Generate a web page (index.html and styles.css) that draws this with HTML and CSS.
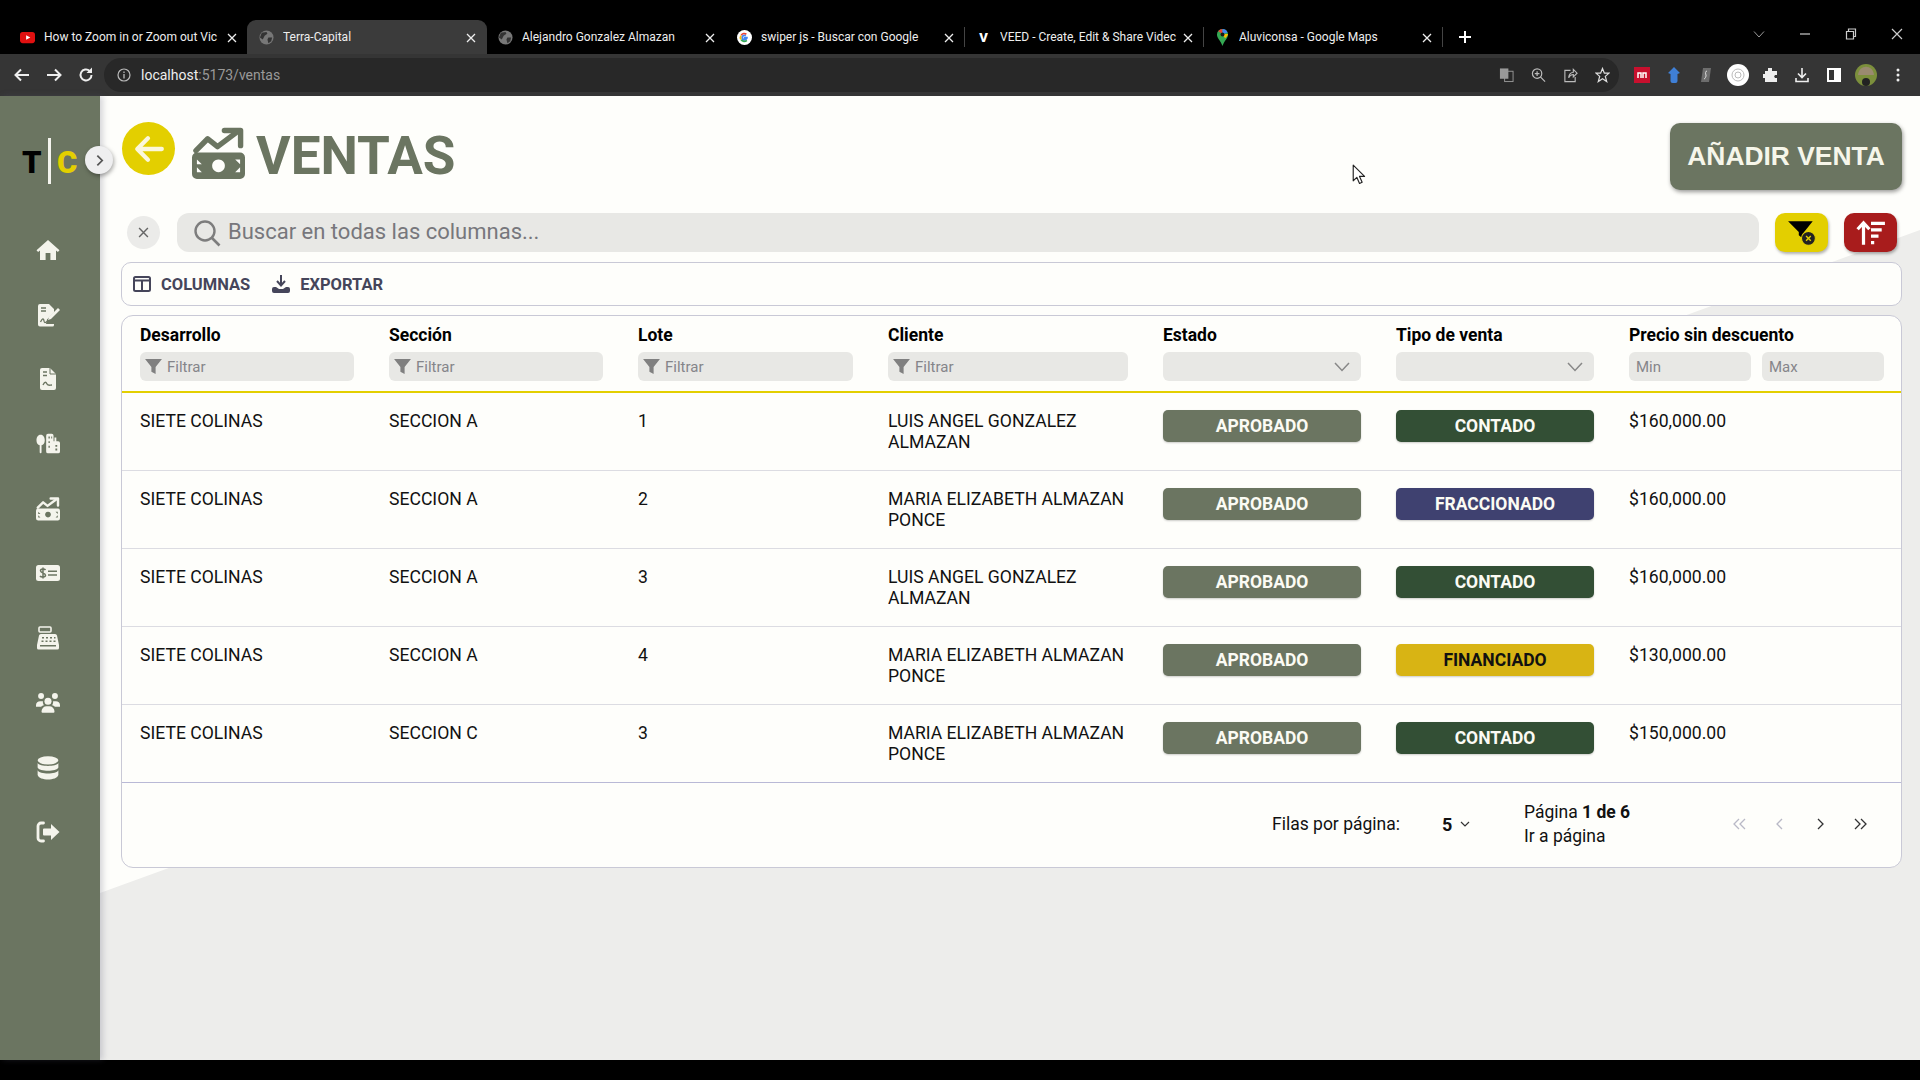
FILE: index.html
```html
<!DOCTYPE html>
<html lang="es">
<head>
  <meta charset="UTF-8" />
  <title>Terra-Capital</title>
  <link rel="stylesheet" href="styles.css">
</head>
<body>
  <svg class="sprites" xmlns="http://www.w3.org/2000/svg">
    <symbol id="i-sales" viewBox="0 0 54 54">
      <path d="M4 24 L16 12 L26 20 L46 5" fill="none" stroke="currentColor" stroke-width="5.5" stroke-linecap="round" stroke-linejoin="round"/>
      <path d="M33 3.500 H49.500 V19" fill="none" stroke="currentColor" stroke-width="5.500" stroke-linecap="round" stroke-linejoin="round"/>
      <path fill-rule="evenodd" fill="currentColor" d="M5 26 H49 a5 5 0 0 1 5 5 V48 a5 5 0 0 1 -5 5 H5 a5 5 0 0 1 -5 -5 V31 a5 5 0 0 1 5 -5 Z M27 33 a6.5 6.5 0 1 0 0.01 0 Z M5 33 V38 H10 Z M49 33 L44 33 L49 38 Z M5 46 V41 L10 46 Z M49 46 V41 L44 46 Z"/>
    </symbol>
    <symbol id="i-home" viewBox="0 0 24 24">
      <path fill="currentColor" d="M12 2 L.5 12.2 l1.6 1.8 L4 12.4 V22 h5.6 v-7 h4.8 v7 H20 v-9.6 l1.9 1.6 1.6-1.8 Z"/>
    </symbol>
    <symbol id="i-sign" viewBox="0 0 24 24">
      <path fill="currentColor" d="M2 3 a2 2 0 0 1 2-2 h9 l5 5 v3.5 l-7 7 -1 4.5 H18 v1 a1.5 1.5 0 0 1 -1.5 1.5 H4 a2 2 0 0 1 -2-2 Z"/>
      <path fill="currentColor" d="M13 14 L22 5 l2 2 -9 9 -3 1 Z"/>
      <path fill="none" stroke="#6b7561" stroke-width="1.3" d="M4.5 19 c2-4 3-4 3.5-1 s2 1 4 0"/>
      <path fill="none" stroke="#6b7561" stroke-width="1.3" d="M5 5 h5 M5 8 h5"/>
    </symbol>
    <symbol id="i-contract" viewBox="0 0 24 24">
      <path fill="currentColor" d="M4 3 a2 2 0 0 1 2-2 h8 l6 6 v14 a2 2 0 0 1 -2 2 H6 a2 2 0 0 1 -2-2 Z"/>
      <path fill="none" stroke="#6b7561" stroke-width="1.4" d="M7 5 h4 M7 8.5 h4 M7 18 c2-4 3-3 4-1 s3 1 5 1"/>
      <path fill="none" stroke="#6b7561" stroke-width="1" d="M14 1 v6 h6"/>
    </symbol>
    <symbol id="i-city" viewBox="0 0 26 24">
      <path fill="currentColor" d="M5 2 c3 0 4.500 3 4.500 6 c0 3 -1.500 5 -3.500 5.300 V21 a1 1 0 0 1 -2 0 V13.300 C2 13 .5 11 .5 8 c0-3 1.500-6 4.500-6 Z"/>
      <path fill="currentColor" fill-rule="evenodd" d="M11 3 a2 2 0 0 1 2-2 h4 a2 2 0 0 1 2 2 V9 h1 V5 h2 V9 h2 a2 2 0 0 1 2 2 V20 a2 2 0 0 1 -2 2 H13 a2 2 0 0 1 -2-2 Z M13.500 4 v2 h1.500 v-2 Z M16.500 4 v2 h1 v-2 Z M13.500 9 v2 h1.500 v-2 Z M13.500 14 v2 h1.500 v-2 Z M21 13 v2 h2 v-2 Z M21 17 v2 h2 v-2 Z"/>
    </symbol>
    <symbol id="i-cheque" viewBox="0 0 24 16">
      <rect width="24" height="16" rx="2.500" fill="currentColor"/>
      <path fill="none" stroke="#6b7561" stroke-width="1.500" d="M9.500 5 C8.500 3.500 4.500 3.500 4.500 5.800 S9.500 8 9.500 10.300 S5 12.500 4 11 M7 2.500 V13.500 M12 6.200 H21 M12 10 H21"/>
    </symbol>
    <symbol id="i-register" viewBox="0 0 24 24">
      <rect x="3" y="1" width="12" height="5" rx="1" fill="none" stroke="currentColor" stroke-width="1.600"/>
      <path fill="currentColor" fill-rule="evenodd" d="M5 8 H19 a2 2 0 0 1 2 1.500 L23 19 v3 a1.500 1.500 0 0 1 -1.500 1.500 H2.500 A1.500 1.500 0 0 1 1 22 v-3 L3 9.500 A2 2 0 0 1 5 8 Z M6 11 v1.600 h2 V11 Z M10 11 v1.600 h2 V11 Z M14 11 v1.600 h2 V11 Z M18 11 v1.600 h1.500 V11 Z M5.500 14.500 v1.600 h2 v-1.600 Z M9.500 14.500 v1.600 h2 v-1.600 Z M13.500 14.500 v1.600 h2 v-1.600 Z M17.500 14.500 v1.600 h2 v-1.600 Z M4 19 v1.500 h16 V19 Z"/>
    </symbol>
    <symbol id="i-users" viewBox="0 0 26 22">
      <circle cx="5.500" cy="3.500" r="3.200" fill="currentColor"/>
      <circle cx="20.500" cy="3.500" r="3.200" fill="currentColor"/>
      <circle cx="13" cy="9" r="3.800" fill="currentColor"/>
      <path fill="currentColor" d="M0 13.500 a4.500 4.500 0 0 1 4.500-4.500 H7.500 a5.500 5.500 0 0 0 1 4.500 a6 6 0 0 0 -3 1.500 H0 Z M26 13.500 a4.500 4.500 0 0 0 -4.500-4.500 H18.500 a5.500 5.500 0 0 1 -1 4.500 a6 6 0 0 1 3 1.500 H26 Z M6 20 a5.500 5.500 0 0 1 5.500-5.500 h3 A5.500 5.500 0 0 1 20 20 v.5 a1 1 0 0 1 -1 1 H7 a1 1 0 0 1 -1-1 Z"/>
    </symbol>
    <symbol id="i-db" viewBox="0 0 20 22">
      <ellipse cx="10" cy="4" rx="9.500" ry="3.800" fill="currentColor"/>
      <path fill="currentColor" d="M.5 6.500 C2 10 18 10 19.500 6.500 V10.500 C18 14.500 2 14.500 .5 10.500 Z M.5 13 C2 17 18 17 19.500 13 V17.500 C18 23 2 23 .5 17.500 Z"/>
    </symbol>
    <symbol id="i-logout" viewBox="0 0 24 22">
      <path fill="none" stroke="currentColor" stroke-width="2.800" stroke-linecap="round" d="M7.500 2 H5 a3 3 0 0 0 -3 3 V17 a3 3 0 0 0 3 3 H7.500"/>
      <path fill="currentColor" d="M15 3 L23.500 11 L15 19 V14.500 H8 a1 1 0 0 1 -1-1 V8.500 a1 1 0 0 1 1-1 H15 Z"/>
    </symbol>
    <symbol id="i-funnel" viewBox="0 0 18 18">
      <path fill="currentColor" d="M1 2 H17 L11 9.500 V16 L7 14 V9.500 Z"/>
    </symbol>
    <symbol id="i-globe" viewBox="0 0 16 16">
      <circle cx="8" cy="8" r="7.500" fill="#777"/>
      <path fill="#333" d="M3 3 l5-1 1 2 -3 2 -2 4 -3-2 Z M10 8 l4 0 -1 4 -3 2 -1-4 Z"/>
    </symbol>
    <symbol id="i-close" viewBox="0 0 10 10">
      <path fill="none" stroke="currentColor" stroke-width="1.300" d="M1 1 L9 9 M9 1 L1 9"/>
    </symbol>
  </svg>

  <div class="tabstrip">
    <div class="tab">
      <svg class="favicon" viewBox="0 0 16 16"><rect y="2" width="16" height="12" rx="3" fill="#e01010"/><path d="M6.500 5.500 L11 8 L6.500 10.500 Z" fill="#fff"/></svg>
      <span class="tab-title">How to Zoom in or Zoom out Vic</span>
      <svg class="tab-x"><use href="#i-close"/></svg>
    </div>
    <div class="tab active">
      <svg class="favicon"><use href="#i-globe"/></svg>
      <span class="tab-title">Terra-Capital</span>
      <svg class="tab-x"><use href="#i-close"/></svg>
    </div>
    <div class="tab">
      <svg class="favicon"><use href="#i-globe"/></svg>
      <span class="tab-title">Alejandro Gonzalez Almazan</span>
      <svg class="tab-x"><use href="#i-close"/></svg>
    </div>
    <div class="tab sep">
      <svg class="favicon" viewBox="0 0 16 16"><circle cx="8" cy="8" r="8" fill="#fff"/><path d="M11.500 8 H8 v1.500 h2 a2.500 2.500 0 1 1 -.6-3.400" fill="none" stroke="#4285f4" stroke-width="1.800"/><path d="M4.500 5.500 A4 4 0 0 1 10 4.500" fill="none" stroke="#ea4335" stroke-width="1.800"/><path d="M4.200 10 A4 4 0 0 1 4.200 6" fill="none" stroke="#fbbc05" stroke-width="1.800"/><path d="M4.400 10.500 A4 4 0 0 0 10.500 11" fill="none" stroke="#34a853" stroke-width="1.800"/></svg>
      <span class="tab-title">swiper js - Buscar con Google</span>
      <svg class="tab-x"><use href="#i-close"/></svg>
    </div>
    <div class="tab sep">
      <span class="favicon veed">V</span>
      <span class="tab-title">VEED - Create, Edit &amp; Share Videc</span>
      <svg class="tab-x"><use href="#i-close"/></svg>
    </div>
    <div class="tab sep last">
      <svg class="favicon" viewBox="0 0 16 20"><path d="M8 0 a6.500 6.500 0 0 1 6.500 6.500 C14.500 11 10 14 8 20 C6 14 1.500 11 1.500 6.500 A6.500 6.500 0 0 1 8 0 Z" fill="#34a853"/><path d="M3 2.500 A6.500 6.500 0 0 1 8 0 V6 Z" fill="#ea4335"/><path d="M8 0 a6.500 6.500 0 0 1 6 4 L8 6 Z" fill="#4285f4"/><path d="M14.500 6 C14.500 8 12 10 11 11 L8 6 Z" fill="#fbbc05"/><circle cx="8" cy="6.500" r="2.300" fill="#1a1a1a"/></svg>
      <span class="tab-title">Aluviconsa - Google Maps</span>
      <svg class="tab-x"><use href="#i-close"/></svg>
    </div>
    <svg class="new-tab" viewBox="0 0 14 14"><path d="M7 1 V13 M1 7 H13" stroke="#fff" stroke-width="2"/></svg>
    <div class="win-controls">
      <svg viewBox="0 0 12 12"><path d="M1 3.500 L6 9 L11 3.500" fill="none" stroke="#999" stroke-width="1"/></svg>
      <svg viewBox="0 0 12 12"><path d="M1 6 H11" stroke="#ccc" stroke-width="1.200"/></svg>
      <svg viewBox="0 0 12 12"><path d="M1.500 3.500 H8.500 V11 H1.500 Z M3.500 3.500 V1 H10.500 V8.500 H8.500" fill="none" stroke="#ccc" stroke-width="1.200"/></svg>
      <svg viewBox="0 0 12 12"><path d="M1 1 L11 11 M11 1 L1 11" stroke="#ccc" stroke-width="1.200"/></svg>
    </div>
  </div>

  <div class="toolbar">
    <svg class="tb-icon" viewBox="0 0 18 18"><path d="M16 9 H3 M8 3.500 L2.500 9 L8 14.500" fill="none" stroke="#eee" stroke-width="2"/></svg>
    <svg class="tb-icon" viewBox="0 0 18 18"><path d="M2 9 H15 M10 3.500 L15.500 9 L10 14.500" fill="none" stroke="#eee" stroke-width="2"/></svg>
    <svg class="tb-icon" viewBox="0 0 18 18"><path d="M14.500 9 a5.500 5.500 0 1 1 -1.800-4.100" fill="none" stroke="#eee" stroke-width="2"/><path d="M15 1.500 V7 H9.500 Z" fill="#eee"/></svg>
    <div class="omnibox">
      <svg class="info" viewBox="0 0 14 14"><circle cx="7" cy="7" r="6" fill="none" stroke="#bbb" stroke-width="1.200"/><path d="M7 6 V10.500 M7 3.500 V5" stroke="#bbb" stroke-width="1.300"/></svg>
      <span class="url"><b>localhost</b>:5173/ventas</span>
      <div class="omni-actions">
        <svg viewBox="0 0 16 16"><rect x="1" y="1" width="9" height="11" fill="#999"/><rect x="6" y="4" width="9" height="11" fill="none" stroke="#999"/></svg>
        <svg viewBox="0 0 16 16"><circle cx="6.500" cy="6.500" r="5" fill="none" stroke="#bbb" stroke-width="1.300"/><path d="M10 10 L15 15 M6.500 4 V9 M4 6.500 H9" stroke="#bbb" stroke-width="1.300"/></svg>
        <svg viewBox="0 0 16 16"><path d="M8 3 H2 V15 H13 V10 M6 11 C6 7 9 5 11 5 V2 L15 6 L11 10 V7.500 C9 7.500 7 9 6 11 Z" fill="none" stroke="#bbb" stroke-width="1.200"/></svg>
        <svg viewBox="0 0 16 16"><path d="M8 1 L10 6 H15 L11 9.500 L12.500 15 L8 12 L3.500 15 L5 9.500 L1 6 H6 Z" fill="none" stroke="#ddd" stroke-width="1.300"/></svg>
      </div>
    </div>
    <div class="ext-icons">
      <svg viewBox="0 0 16 16"><rect width="16" height="16" fill="#c8102e"/><path d="M4 11 V6 H7 V11 M9 11 V6 H12 V11" fill="none" stroke="#fff" stroke-width="1.500"/></svg>
      <svg viewBox="0 0 16 16"><path d="M8 0 L14 6 L11.500 7 V14 a2 2 0 0 1 -2 2 H6.500 a2 2 0 0 1 -2-2 V7 L2 6 Z" fill="#3f7fd6"/></svg>
      <svg viewBox="0 0 16 16"><path d="M5 1 H13 L11 15 H3 Z" fill="#6d6d6d"/><path d="M9 4 C7 4 7.500 7 8 8 S7 12 6 12" fill="none" stroke="#ddd"/></svg>
      <svg viewBox="0 0 22 22"><circle cx="11" cy="11" r="11" fill="#fff"/><circle cx="11" cy="11" r="6" fill="none" stroke="#bbb"/><circle cx="11" cy="11" r="3" fill="none" stroke="#bbb"/></svg>
      <svg viewBox="0 0 16 16"><path d="M6 1 h4 v3 h5 v4 h-2 a2 2 0 0 0 0 3 h2 v4 H3 v-4 H1 V7 h2 V4 h3 Z" fill="#eee"/></svg>
      <svg viewBox="0 0 16 16"><path d="M8 1 V10 M4 6.500 L8 10.500 L12 6.500 M2 11 V14.500 H14 V11" fill="none" stroke="#eee" stroke-width="1.600"/></svg>
      <svg viewBox="0 0 16 16"><rect x="2" y="2" width="12" height="12" fill="none" stroke="#fff" stroke-width="2"/><rect x="8" y="2" width="6" height="12" fill="#fff"/></svg>
      <svg viewBox="0 0 22 22"><circle cx="11" cy="11" r="11" fill="#7c8f3c"/><path d="M3 11 C4 0 18 0 19 11 Z" fill="#9a8a70"/><circle cx="11" cy="18" r="4" fill="#222"/></svg>
      <svg viewBox="0 0 16 16"><circle cx="8" cy="3" r="1.500" fill="#eee"/><circle cx="8" cy="8" r="1.500" fill="#eee"/><circle cx="8" cy="13" r="1.500" fill="#eee"/></svg>
    </div>
  </div>

  <div class="app">
    <aside class="sidebar">
      <div class="logo">
        <span class="logo-t">T</span><span class="logo-bar"></span><span class="logo-c">C</span>
        <button class="side-toggle"><svg viewBox="0 0 12 12"><path d="M4 1.500 L8.500 6 L4 10.500" fill="none" stroke="#555" stroke-width="1.600"/></svg></button>
      </div>
      <nav class="side-nav">
        <svg><use href="#i-home"/></svg>
        <svg><use href="#i-sign"/></svg>
        <svg><use href="#i-contract"/></svg>
        <svg><use href="#i-city"/></svg>
        <svg><use href="#i-sales"/></svg>
        <svg><use href="#i-cheque"/></svg>
        <svg><use href="#i-register"/></svg>
        <svg><use href="#i-users"/></svg>
        <svg><use href="#i-db"/></svg>
        <svg><use href="#i-logout"/></svg>
      </nav>
    </aside>

    <main class="content">
      <header class="page-head">
        <button class="back"><svg viewBox="0 0 30 30"><path d="M27 15 H5 M14 5 L4 15 L14 25" fill="none" stroke="#fbf7dc" stroke-width="4" stroke-linecap="round" stroke-linejoin="round"/></svg></button>
        <svg class="title-icon"><use href="#i-sales"/></svg>
        <h1>VENTAS</h1>
        <button class="add-btn">AÑADIR VENTA</button>
      </header>

      <div class="search-row">
        <button class="clear"><svg><use href="#i-close"/></svg></button>
        <label class="search">
          <svg viewBox="0 0 28 28"><circle cx="12" cy="12" r="9.500" fill="none" stroke="#7d7d7d" stroke-width="2.400"/><path d="M19 19 L26.500 26.500" stroke="#7d7d7d" stroke-width="2.600"/></svg>
          <input type="text" placeholder="Buscar en todas las columnas...">
        </label>
        <button class="sq-btn yellow">
          <svg viewBox="0 0 28 24"><path d="M1 1 H24 L16 11 V18 L11 14 V11 Z" fill="#000"/><circle cx="20" cy="17" r="6.500" fill="#222" stroke="#e3cf00" stroke-width="1"/><path d="M17.800 14.800 L22.200 19.200 M22.200 14.800 L17.800 19.200" stroke="#e3cf00" stroke-width="1.300"/></svg>
        </button>
        <button class="sq-btn red">
          <svg viewBox="0 0 28 24"><path d="M7 23 V3 M1.500 8.500 L7 2.500 L12.500 8.500" fill="none" stroke="#fff" stroke-width="3"/><path d="M14 3 H27 M14 9 H24 M14 15 H21 M14 21 H17" stroke="#fff" stroke-width="3"/></svg>
        </button>
      </div>

      <div class="table-tools">
        <button class="tool">
          <svg viewBox="0 0 18 16"><path d="M2.500 1 H15.500 a1.500 1.500 0 0 1 1.500 1.500 V13.500 a1.500 1.500 0 0 1 -1.500 1.500 H2.500 A1.500 1.500 0 0 1 1 13.500 V2.500 A1.500 1.500 0 0 1 2.500 1 Z M1 4.500 H17 M9 4.500 V15" fill="none" stroke="#45455a" stroke-width="2"/></svg>
          COLUMNAS
        </button>
        <button class="tool">
          <svg viewBox="0 0 18 18"><path d="M9 0 V9 M5 6 L9 10.500 L13 6" fill="none" stroke="#45455a" stroke-width="2"/><path d="M0 14 a2 2 0 0 1 2-2 H4 L7 14 H11 L14 12 H16 a2 2 0 0 1 2 2 V16 a2 2 0 0 1 -2 2 H2 a2 2 0 0 1 -2-2 Z" fill="#45455a"/></svg>
          EXPORTAR
        </button>
      </div>

      <section class="table-card">
        <table>
          <colgroup>
            <col class="c-a"><col class="c-a"><col class="c-l"><col class="c-c"><col class="c-e"><col class="c-e"><col>
          </colgroup>
          <thead>
            <tr>
              <th>Desarrollo<label class="filter"><svg><use href="#i-funnel"/></svg><input placeholder="Filtrar"></label></th>
              <th>Sección<label class="filter"><svg><use href="#i-funnel"/></svg><input placeholder="Filtrar"></label></th>
              <th>Lote<label class="filter"><svg><use href="#i-funnel"/></svg><input placeholder="Filtrar"></label></th>
              <th>Cliente<label class="filter"><svg><use href="#i-funnel"/></svg><input placeholder="Filtrar"></label></th>
              <th>Estado<div class="filter drop"><svg viewBox="0 0 16 10"><path d="M1 1 L8 8.500 L15 1" fill="none" stroke="#888" stroke-width="1.500"/></svg></div></th>
              <th>Tipo de venta<div class="filter drop"><svg viewBox="0 0 16 10"><path d="M1 1 L8 8.500 L15 1" fill="none" stroke="#888" stroke-width="1.500"/></svg></div></th>
              <th class="price">Precio sin descuento<div class="range"><input class="filter" placeholder="Min"><input class="filter" placeholder="Max"></div></th>
            </tr>
          </thead>
          <tbody>
            <tr><td>SIETE COLINAS</td><td>SECCION A</td><td>1</td><td>LUIS ANGEL GONZALEZ ALMAZAN</td><td><span class="chip olive">APROBADO</span></td><td><span class="chip green">CONTADO</span></td><td>$160,000.00</td></tr>
            <tr><td>SIETE COLINAS</td><td>SECCION A</td><td>2</td><td>MARIA ELIZABETH ALMAZAN PONCE</td><td><span class="chip olive">APROBADO</span></td><td><span class="chip indigo">FRACCIONADO</span></td><td>$160,000.00</td></tr>
            <tr><td>SIETE COLINAS</td><td>SECCION A</td><td>3</td><td>LUIS ANGEL GONZALEZ ALMAZAN</td><td><span class="chip olive">APROBADO</span></td><td><span class="chip green">CONTADO</span></td><td>$160,000.00</td></tr>
            <tr><td>SIETE COLINAS</td><td>SECCION A</td><td>4</td><td>MARIA ELIZABETH ALMAZAN PONCE</td><td><span class="chip olive">APROBADO</span></td><td><span class="chip gold">FINANCIADO</span></td><td>$130,000.00</td></tr>
            <tr><td>SIETE COLINAS</td><td>SECCION C</td><td>3</td><td>MARIA ELIZABETH ALMAZAN PONCE</td><td><span class="chip olive">APROBADO</span></td><td><span class="chip green">CONTADO</span></td><td>$150,000.00</td></tr>
          </tbody>
        </table>
        <footer class="pager">
          <span class="rows-label">Filas por página:</span>
          <span class="rows-select"><b>5</b><svg viewBox="0 0 10 6"><path d="M1 1 L5 5 L9 1" fill="none" stroke="#333" stroke-width="1.200"/></svg></span>
          <div class="page-info">
            <span>Página <b>1 de 6</b></span>
            <span>Ir a página</span>
          </div>
          <div class="page-nav">
            <svg class="off" viewBox="0 0 16 12"><path d="M7 1 L2 6 L7 11 M13 1 L8 6 L13 11" fill="none" stroke="#b9b9c6" stroke-width="1.300"/></svg>
            <svg class="off" viewBox="0 0 16 12"><path d="M10 1 L5 6 L10 11" fill="none" stroke="#b9b9c6" stroke-width="1.300"/></svg>
            <svg viewBox="0 0 16 12"><path d="M6 1 L11 6 L6 11" fill="none" stroke="#333" stroke-width="1.300"/></svg>
            <svg viewBox="0 0 16 12"><path d="M3 1 L8 6 L3 11 M9 1 L14 6 L9 11" fill="none" stroke="#333" stroke-width="1.300"/></svg>
          </div>
        </footer>
      </section>

      <svg class="pointer" viewBox="0 0 13 20"><path d="M1 1 V16 L4.500 12.800 L7 18.500 L9.500 17.400 L7 11.800 H11.800 Z" fill="#fff" stroke="#222" stroke-width="1.100" stroke-linejoin="round"/></svg>
    </main>
  </div>
  <div class="screen-edge"></div>
</body>
</html>
```

FILE: styles.css
```css
:root {
  --olive: #6b7561;
  --yellow: #e3cf00;
  --field: #e8e8e5;
  --line: #c9c9d6;
}

* {
  box-sizing: border-box;
}

body {
  margin: 0;
  height: 100vh;
  overflow: hidden;
  display: flex;
  flex-direction: column;
  background: #000;
  font-family: Roboto, sans-serif;
  color: #111;
}

button {
  border: none;
  padding: 0;
  font-family: inherit;
  cursor: pointer;
}

input {
  border: none;
  outline: none;
  background: none;
  font-family: inherit;
}

.sprites {
  position: absolute;
  width: 0;
  height: 0;
}

/* browser chrome */
.tabstrip {
  height: 54px;
  padding: 20px 0 0 8px;
  display: flex;
  align-items: stretch;
  background: #000;
  color: #eee;
  font-size: 12px;
}

.tab {
  width: 240px;
  padding: 0 11px 0 12px;
  display: flex;
  align-items: center;
  position: relative;
  margin-right: -1px;
}

.tab.active {
  background: #3b3b3b;
  border-radius: 9px 9px 0 0;
}

.tab.sep::after {
  content: "";
  position: absolute;
  right: 0;
  top: 7px;
  bottom: 7px;
  width: 1px;
  background: #444;
}

.favicon {
  width: 15px;
  height: 17px;
  flex: none;
  margin-right: 9px;
}

.veed {
  font-weight: 900;
  font-size: 13px;
  line-height: 17px;
  text-align: center;
  color: #fff;
}

.tab-title {
  flex: 1;
  margin-right: 6px;
  overflow: hidden;
  white-space: nowrap;
}

.tab-x {
  width: 10px;
  height: 10px;
  flex: none;
  color: #eee;
  margin-top: 1px;
}

.new-tab {
  width: 14px;
  height: 14px;
  align-self: center;
  margin-left: 16px;
}

.win-controls {
  margin-left: auto;
  height: 34px;
  margin-top: -20px;
  padding: 28px 17px 0 0;
  display: flex;
  gap: 34px;
}

.win-controls svg {
  width: 12px;
  height: 12px;
}

.toolbar {
  height: 42px;
  padding: 0 13px;
  display: flex;
  align-items: center;
  background: #353535;
}

.tb-icon {
  width: 18px;
  height: 18px;
  flex: none;
  margin-right: 14px;
}

.omnibox {
  width: 1515px;
  height: 34px;
  margin-left: -5px;
  padding: 0 9px 0 13px;
  display: flex;
  align-items: center;
  border-radius: 17px;
  background: #282828;
}

.info {
  width: 14px;
  height: 14px;
  margin-right: 10px;
}

.url {
  font-size: 14px;
  color: #999;
}

.url b {
  font-weight: 400;
  color: #eee;
}

.omni-actions {
  margin-left: auto;
  display: flex;
  gap: 17px;
}

.omni-actions svg {
  width: 15px;
  height: 16px;
}

.ext-icons {
  margin-left: 15px;
  display: flex;
  align-items: center;
  gap: 16px;
}

.ext-icons svg {
  width: 16px;
  height: 16px;
}

.ext-icons svg:nth-child(4),
.ext-icons svg:nth-child(8) {
  width: 22px;
  height: 22px;
  margin: 0 -3px;
}

/* app */
.app {
  flex: 1;
  display: flex;
  min-height: 0;
}

.sidebar {
  width: 100px;
  flex: none;
  background: var(--olive);
  box-shadow: 3px 0 6px rgba(90, 90, 120, 0.25);
  position: relative;
  z-index: 2;
}

.logo {
  height: 46px;
  margin-top: 42px;
  padding-left: 22px;
  display: flex;
  align-items: center;
  position: relative;
  font-size: 31px;
  font-weight: 900;
}

.logo-t {
  color: #000;
  width: 22px;
  margin-top: 2px;
}

.logo-bar {
  width: 3px;
  height: 46px;
  margin: 0 6px 0 4px;
  background: #f4f4ee;
}

.logo-c {
  color: var(--yellow);
  margin-top: 2px;
}

.side-toggle {
  position: absolute;
  left: 85px;
  top: 8px;
  width: 28px;
  height: 28px;
  display: flex;
  align-items: center;
  justify-content: center;
  border-radius: 50%;
  background: #efeff0;
  box-shadow: 1px 2px 4px rgba(0, 0, 0, 0.35);
}

.side-toggle svg {
  width: 13px;
  height: 13px;
}

.side-nav {
  margin-top: 54px;
  padding-right: 4px;
  display: flex;
  flex-direction: column;
  align-items: center;
  gap: 40.7px;
  color: #f4f4ec;
}

.side-nav svg {
  width: 24px;
  height: 24px;
}

.content {
  flex: 1;
  min-width: 0;
  padding: 24px 18px 0 21px;
  position: relative;
  background: #fefefb;
}

/* the grey wedge behind the table */
.content::before {
  content: "";
  position: absolute;
  inset: 0;
  background: #ededeb;
  clip-path: polygon(0 797px, 100% 134px, 100% 100%, 0 100%);
}

.content > * {
  position: relative;
}

.content > .pointer {
  position: absolute;
  left: 1252px;
  top: 68px;
  width: 14px;
  height: 21px;
}

.page-head {
  height: 69px;
  display: flex;
  align-items: flex-start;
  padding-left: 1px;
}

.back {
  width: 53px;
  height: 53px;
  margin-top: 2px;
  display: flex;
  align-items: center;
  justify-content: center;
  border-radius: 50%;
  background: var(--yellow);
}

.back svg {
  width: 32px;
  height: 32px;
}

.title-icon {
  width: 53px;
  height: 53px;
  margin: 7px 0 0 17px;
  color: var(--olive);
}

h1 {
  margin: 4px 0 0 11px;
  font-size: 53px;
  line-height: 64px;
  font-weight: 700;
  color: var(--olive);
}

.add-btn {
  margin-left: auto;
  margin-top: 3px;
  width: 232px;
  height: 67px;
  border-radius: 10px;
  background: var(--olive);
  box-shadow: 1px 2px 4px rgba(0, 0, 0, 0.4);
  color: #f6f6ea;
  font-family: "Liberation Sans", sans-serif;
  font-size: 26.4px;
  font-weight: 700;
}

.search-row {
  margin-top: 24px;
  height: 39px;
  display: flex;
  align-items: center;
  padding-right: 5px;
}

.clear {
  width: 33px;
  height: 33px;
  margin-left: 6px;
  flex: none;
  display: flex;
  align-items: center;
  justify-content: center;
  border-radius: 50%;
  background: #ebebe9;
  color: #666;
}

.clear svg {
  width: 11px;
  height: 11px;
}

.search {
  width: 1583px;
  height: 39px;
  margin-left: 17px;
  padding-left: 16px;
  display: flex;
  align-items: center;
  border-radius: 12px;
  background: var(--field);
}

.search svg {
  width: 28px;
  height: 28px;
  flex: none;
}

.search input {
  flex: 1;
  margin-left: 5px;
  margin-top: -2px;
  font-size: 22px;
}

.search input::placeholder {
  color: #77777c;
  opacity: 1;
}

.sq-btn {
  width: 53px;
  height: 39px;
  margin-left: 16px;
  flex: none;
  display: flex;
  align-items: center;
  justify-content: center;
  border-radius: 10px;
  box-shadow: 1px 2px 3px rgba(0, 0, 0, 0.3);
}

.sq-btn svg {
  width: 30px;
  height: 26px;
}

.yellow {
  background: var(--yellow);
}

.red {
  background: #a81c1c;
}

.table-tools {
  margin-top: 10px;
  height: 44px;
  padding-left: 11px;
  display: flex;
  align-items: center;
  gap: 22px;
  border: 1px solid var(--line);
  border-radius: 10px;
  background: #fefefb;
}

.tool {
  display: flex;
  align-items: center;
  gap: 10px;
  background: none;
  color: #45455a;
  font-size: 16.5px;
  font-weight: 700;
}

.tool svg {
  width: 18px;
  height: 18px;
}

.table-card {
  margin-top: 9px;
  border: 1px solid var(--line);
  border-radius: 12px;
  background: #fefefb;
  overflow: hidden;
}

table {
  width: 100%;
  table-layout: fixed;
  border-collapse: separate;
  border-spacing: 0;
}

.c-a {
  width: 249px;
}

.c-l {
  width: 250px;
}

.c-c {
  width: 275px;
}

.c-e {
  width: 233px;
}

th {
  height: 77px;
  padding: 7px 17px 0 18px;
  vertical-align: top;
  text-align: left;
  font-size: 17.5px;
  line-height: 24px;
  font-weight: 700;
  color: #000;
  border-bottom: 2px solid var(--yellow);
}

th.price {
  padding-right: 15px;
}

.filter {
  height: 29px;
  margin-top: 5px;
  padding-left: 4px;
  display: flex;
  align-items: center;
  border-radius: 6px;
  background: var(--field);
  font-weight: 400;
}

.filter svg {
  width: 19px;
  height: 19px;
  flex: none;
  color: #808080;
}

.filter input,
input.filter {
  font-size: 15px;
}

.filter input {
  width: 100%;
  margin-left: 4px;
  padding: 0;
}

input.filter {
  padding-left: 7px;
}

.filter input::placeholder,
input.filter::placeholder {
  color: #85858a;
  opacity: 1;
}

.drop {
  justify-content: flex-end;
  padding-right: 11px;
}

.drop svg {
  width: 16px;
  height: 10px;
}

.range {
  display: flex;
  gap: 11px;
}

.range input {
  width: 122px;
}

td {
  height: 78px;
  padding: 18px 17px 0 18px;
  vertical-align: top;
  font-size: 17.6px;
  line-height: 21px;
  border-bottom: 1px solid #dcdce2;
}

tbody tr:last-child td {
  border-bottom: 1px solid #b9b9d6;
}

.chip {
  display: block;
  height: 32px;
  margin-top: -1px;
  border-radius: 5px;
  text-align: center;
  font-size: 17.5px;
  font-weight: 700;
  line-height: 32px;
  color: #fbfbf4;
  box-shadow: 0 1px 2px rgba(0, 0, 0, 0.2);
}

.olive {
  background: var(--olive);
}

.green {
  background: #334f35;
}

.indigo {
  background: #3f4170;
}

.gold {
  background: #d8b414;
  color: #111;
}

.pager {
  height: 84px;
  padding: 0 33px 2px 0;
  display: flex;
  align-items: center;
  justify-content: flex-end;
  font-size: 17.5px;
}

.rows-select {
  width: 82px;
  margin: 0 0 0 42px;
  display: flex;
  align-items: center;
  gap: 8px;
}

.rows-select b {
  font-weight: 700;
  font-size: 18px;
}

.rows-select svg {
  width: 10px;
  height: 6px;
}

.page-info {
  width: 208px;
  display: flex;
  flex-direction: column;
  line-height: 24px;
}

.page-nav {
  display: flex;
  gap: 24px;
}

.page-nav svg {
  width: 16px;
  height: 12px;
}

.screen-edge {
  height: 20px;
  flex: none;
  background: #000;
}
```
